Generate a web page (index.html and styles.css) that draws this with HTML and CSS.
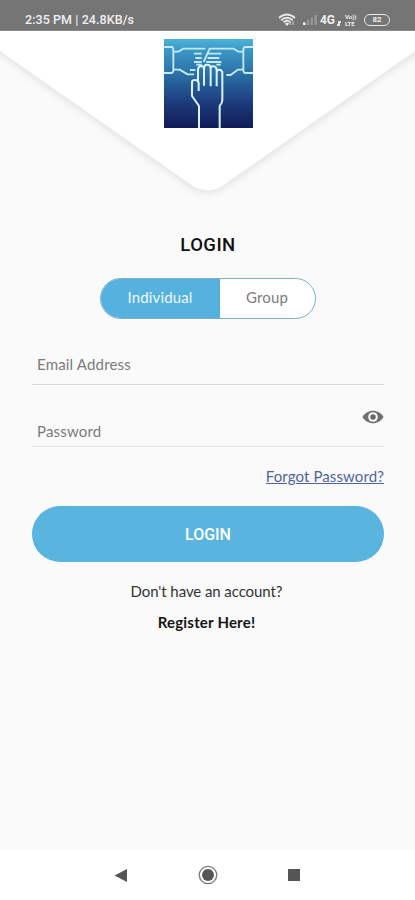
FILE: index.html
```html
<!DOCTYPE html>
<html lang="en">
<head>
<meta charset="utf-8">
<meta name="viewport" content="width=device-width, initial-scale=1">
<title>Login</title>
<link rel="stylesheet" href="styles.css">
</head>
<body>
<div class="status">
  <span class="status-time">2:35 PM | 24.8KB/s</span>
  <div class="status-icons">
    <svg class="wifi" width="18" height="14" viewBox="0 0 18 14" fill="none" stroke="#e8e8e8" stroke-width="1.9">
      <path d="M1 5Q9-2 17 5M3.3 7.3Q9 2.3 14.7 7.3M5.6 9.4Q9 6.3 12.4 9.4"/>
      <path d="M7 10.5L9 13L11 10.5Q9 9 7 10.5Z" fill="#f2f2f2" stroke="none"/>
      <path d="M12.2 12V8.5M15 8.5V12" stroke-width="1.1" stroke="#ccc"/>
    </svg>
    <svg class="signal" width="17" height="11" viewBox="0 0 17 11">
      <path d="M1 8.5h2.6V11H1z" fill="#f5f5f5"/>
      <path d="M5 6h2.3v5H5zM8.7 3.5H11V11H8.7zM12.4 1h2.5v10h-2.5z" fill="#989898"/>
    </svg>
    <span class="net">4G</span>
    <svg class="data" width="5" height="6" viewBox="0 0 5 6"><path d="M1 1h3v2H3v3H0V4h1z" fill="#e5e5e5"/></svg>
    <span class="volte"><span>Vo))</span><span>LTE</span></span>
    <span class="battery">82</span>
  </div>
</div>
<header class="header">
  <svg class="flap" width="415" height="180" viewBox="0 31 415 180">
    <path class="flap-shape" d="M-20 20H435V37L228 182Q208 199 187 182L-20 37Z"/>
  </svg>
  <svg class="logo" width="89" height="89" viewBox="42 28 267 267">
    <defs>
      <linearGradient id="sky" x1="0" y1="0" x2="0" y2="1">
        <stop offset="0" stop-color="#4bb3d8"/>
        <stop offset=".13" stop-color="#3b97c5"/>
        <stop offset=".43" stop-color="#286aa2"/>
        <stop offset=".72" stop-color="#1c3b7c"/>
        <stop offset="1" stop-color="#101b58"/>
      </linearGradient>
    </defs>
    <path d="M42 28h267v267H42z" fill="url(#sky)"/>
    <g fill="none" stroke="#c5e9f5" stroke-width="5.5" stroke-linejoin="round">
      <path d="M42 52H66Q70 53 70 62V122Q70 129 64 130H42M309 52H285Q280 53 280 62V122Q280 129 286 130H309"/>
      <path d="M70 66H85L99 57H166M70 120H89L113 134H132M280 66H266L251 57H177M280 120H263L242 136H229"/>
      <path d="M179 57L161 97M132 72H155M136 85H155M132 97H155M139 105H155M120 121H136M173 72H214M173 85H208M169 97H214M199 105H212"/>
    </g>
    <g fill="none" stroke="#dcf3fc" stroke-width="6" stroke-linejoin="round">
      <path d="M147 295V229L126 199V158Q126 151 135 151Q145 151 146 160V184M144 158V120Q145 109 153 109Q162 109 162 119V168M162 119Q162 104 172 105Q182 105 182 118V170M182 118Q182 108 191 110Q200 111 200 122V170M200 128Q201 119 209 120Q217 122 217 130V212Q217 219 209 229V295"/>
    </g>
  </svg>
</header>
<main class="content">
  <h1 class="title">LOGIN</h1>
  <div class="toggle">
    <div class="option selected"><span>Individual</span></div>
    <div class="option"><span>Group</span></div>
  </div>
  <div class="field email"><span>Email Address</span></div>
  <div class="field password">
    <span>Password</span>
    <svg class="eye" width="22" height="14" viewBox="0 0 22 14">
      <path d="M0.5 7C5-1.3 17-1.3 21.5 7C17 15.3 5 15.3.5 7Z" fill="#707070"/>
      <circle cx="11" cy="7" r="4.8" fill="#fafafa"/>
      <circle cx="11" cy="7" r="2.7" fill="#666"/>
    </svg>
  </div>
  <div class="forgot"><span>Forgot Password?</span></div>
  <div class="button"><span>LOGIN</span></div>
  <p class="question"><span>Don't have an account?</span></p>
  <p class="register"><span>Register Here!</span></p>
</main>
<nav class="nav">
  <svg width="14" height="15" viewBox="0 0 14 15"><path d="M.5 7.5L13 1V14Z" fill="#555"/></svg>
  <svg width="20" height="20" viewBox="0 0 20 20"><circle cx="10" cy="10" r="8.7" fill="#fff" stroke="#777" stroke-width="1.3"/><circle cx="10" cy="10" r="6" fill="#555"/></svg>
  <svg width="14" height="14" viewBox="0 0 14 14"><path d="M1 1h12v12H1z" fill="#555"/></svg>
</nav>
</body>
</html>
```
FILE: styles.css
```css
* { box-sizing: border-box; }
body {
  margin: 0;
  width: 415px;
  height: 900px;
  overflow: hidden;
  display: flex;
  flex-direction: column;
  background: #fafafa;
  font-family: Lato, sans-serif;
  font-size: 15px;
  color: #333;
}
.status {
  height: 31px;
  flex: none;
  display: flex;
  justify-content: space-between;
  padding: 8px 25px 0;
  background: #757575;
  border-bottom: 1px solid #8b8b8b;
  color: #f0f0f0;
  font-family: Roboto, sans-serif;
  font-weight: 500;
}
.status-time { font-size: 12.5px; line-height: 24px; letter-spacing: .07px; }
.status-icons { display: flex; align-items: center; height: 23px; }
.signal { margin-left: 6px; }
.net { font-size: 12px; font-weight: 700; margin-left: 1px; }
.data { margin: 6px 3px 0 2px; }
.volte { display: flex; flex-direction: column; width: 14px; font-size: 6px; line-height: 7px; font-weight: 700; }
.battery {
  width: 26px;
  height: 12px;
  margin-left: 5px;
  border: 1.5px solid #e8e8e8;
  border-radius: 6px;
  font-size: 8px;
  line-height: 10px;
  font-weight: 700;
  text-align: center;
}
.header { height: 180px; flex: none; display: grid; overflow: hidden; }
.flap, .logo { grid-area: 1 / 1; }
.flap-shape { fill: #fff; filter: drop-shadow(0 2px 4px rgba(0, 0, 0, .11)); }
.logo { margin: 8px 0 0 164px; z-index: 1; }
.content { flex: 1; padding: 0 31px 0 32px; }
.title {
  margin: 22px 0 0;
  font: 500 18.5px/24px Roboto, sans-serif;
  letter-spacing: .45px;
  text-align: center;
  color: #111;
}
.toggle {
  width: 216px;
  height: 41px;
  margin: 21px 0 0 68px;
  display: flex;
  border: 1px solid #7cafbf;
  border-radius: 21px;
  overflow: hidden;
  background: #fff;
}
.option { flex: 1; padding-right: 1px; text-align: center; line-height: 37px; letter-spacing: .15px; color: #7c7c7c; }
.selected { flex: none; width: 119px; background: #55b1de; color: #f0faff; }
.field { position: relative; padding-left: 5px; color: #7a7a7a; line-height: 20px; letter-spacing: .18px; }
.email { height: 66px; padding-top: 35px; border-bottom: 1px solid #d8d8d8; }
.password { height: 62px; padding-top: 36px; border-bottom: 1px solid #e1e1e1; }
.eye { position: absolute; right: 0; top: 25px; }
.forgot { margin-top: 19px; line-height: 20px; letter-spacing: .1px; text-align: right; color: #4c659d; text-decoration: underline; }
.button {
  height: 56px;
  margin-top: 20px;
  border-radius: 28px;
  background: #59b4df;
  color: #fff;
  font: 500 16px/57px Roboto, sans-serif;
  text-align: center;
}
.question, .register { margin: 19px 0 0; line-height: 20px; text-align: center; }
.question { padding-right: 3px; letter-spacing: -.08px; }
.register { margin-top: 11px; padding-right: 3px; font-weight: 700; color: #151515; letter-spacing: .2px; }
.nav {
  height: 51px;
  flex: none;
  display: flex;
  align-items: center;
  justify-content: space-between;
  padding: 1px 114px 0;
  background: #fff;
}
```
